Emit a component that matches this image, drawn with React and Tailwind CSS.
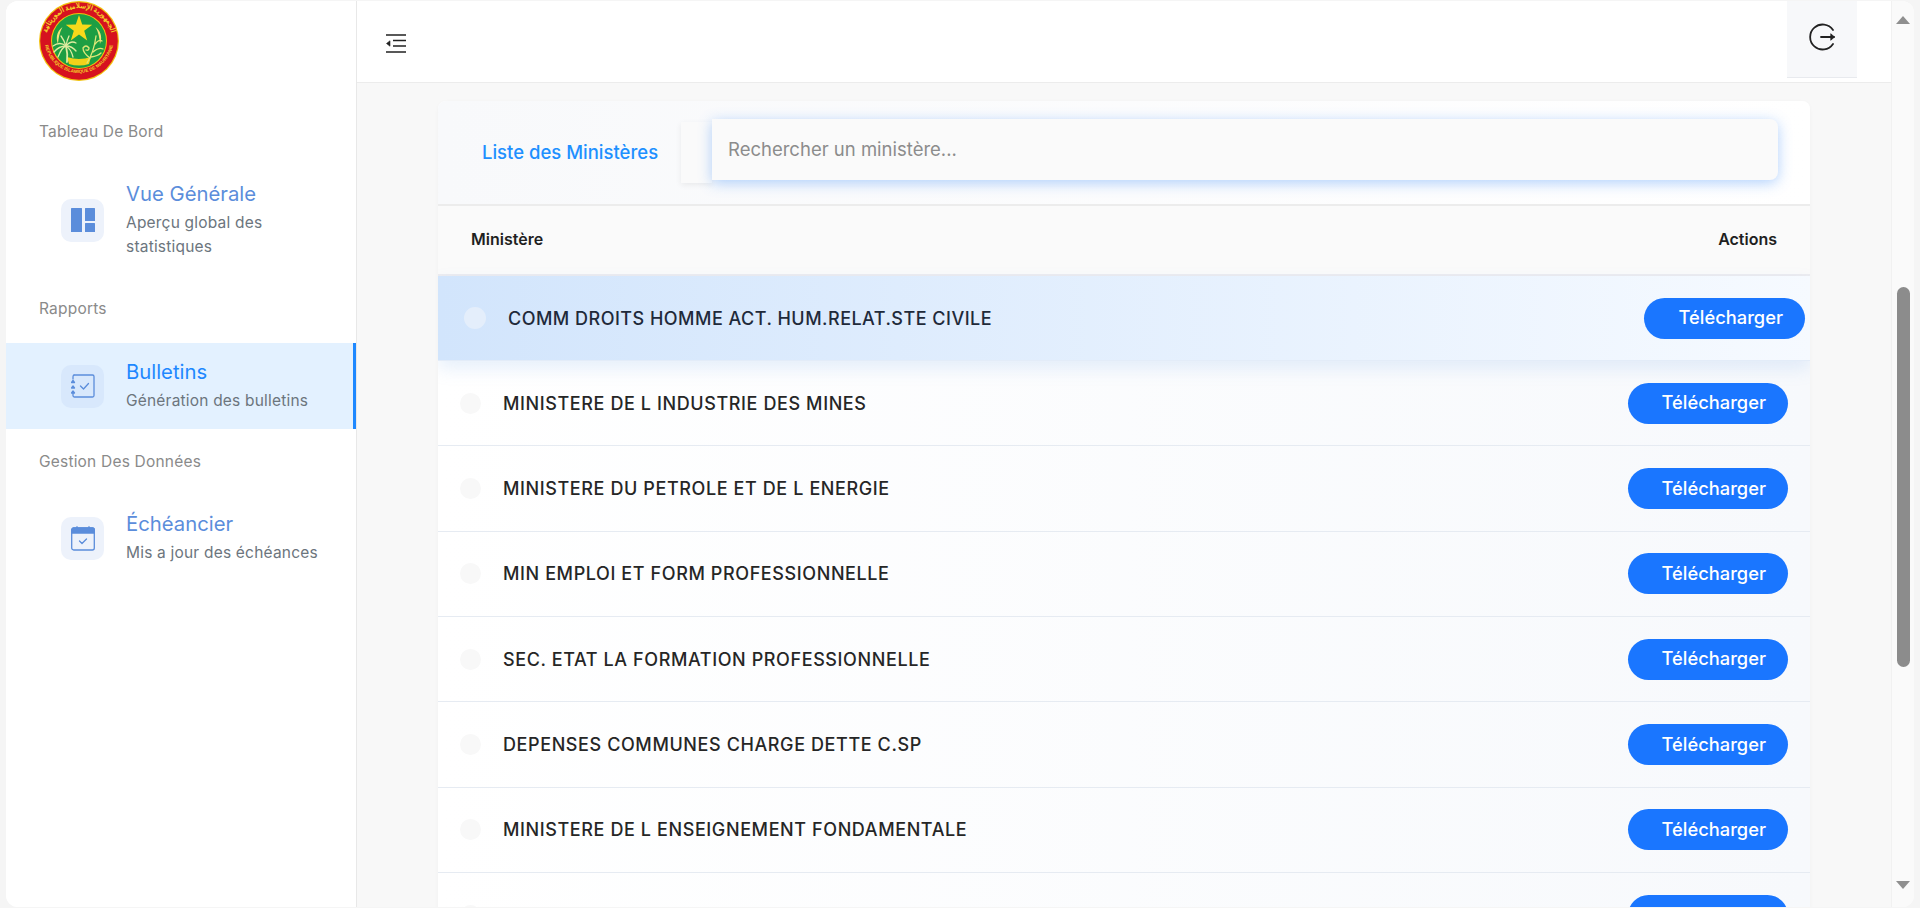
import React from "react";

const rows = [
  "MINISTERE DE L INDUSTRIE DES MINES",
  "MINISTERE DU PETROLE ET DE L ENERGIE",
  "MIN EMPLOI ET FORM PROFESSIONNELLE",
  "SEC. ETAT LA FORMATION PROFESSIONNELLE",
  "DEPENSES COMMUNES CHARGE DETTE C.SP",
  "MINISTERE DE L ENSEIGNEMENT FONDAMENTALE",
  "",
];

const font = { fontFamily: "Inter, 'Noto Sans', 'Liberation Sans', sans-serif" };

const Logo = () => (
  <svg width="82" height="82" viewBox="0 0 82 82">
    <defs>
      <path id="arcTop" d="M8 45 A33.2 33.2 0 1 1 74 45" />
      <path id="arcBottom" d="M6.5 42 A34.7 34.7 0 0 0 75.5 42" />
    </defs>
    <circle cx="41" cy="41" r="40" fill="#f2c20f" />
    <circle cx="41" cy="41" r="38.8" fill="#d6121f" />
    <circle cx="41" cy="41" r="28" fill="#f2c20f" />
    <circle cx="41" cy="41" r="27" fill="#1d9e43" />
    <text fontSize="7" fill="#f4cf2a" fontFamily="'Noto Sans', sans-serif" fontWeight="700">
      <textPath href="#arcTop" startOffset="50%" textAnchor="middle">الجمهورية الإسلامية الموريتانية</textPath>
    </text>
    <text fontSize="4.6" fill="#f4cf2a" fontFamily="'Liberation Sans', sans-serif" fontWeight="700">
      <textPath href="#arcBottom" startOffset="50%" textAnchor="middle">REPUBLIQUE ISLAMIQUE DE MAURITANIE</textPath>
    </text>
    {/* star */}
    <polygon fill="#f7d91a" points="41,15 44.2,24.6 54.3,24.7 46.2,30.8 49.2,40.5 41,34.6 32.8,40.5 35.8,30.8 27.7,24.7 37.8,24.6" />
    {/* crescents */}
    <path d="M24.5 27 C18 32 18 39 20 44 C20.5 38 21.5 32 24.5 27Z" fill="#f2e27a" />
    <path d="M57.5 27 C64 32 64 39 62 44 C61.5 38 60.5 32 57.5 27Z" fill="#f2e27a" />
    {/* base */}
    <path d="M29 57 L31 64 Q41 67 51 64 L53 57 Q41 61 29 57Z" fill="#f2d21a" />
    {/* palm */}
    <g stroke="#dfeca0" strokeWidth="1.3" fill="none" strokeLinecap="round">
      <path d="M29 62 Q30 54 28 46" strokeWidth="1.8" />
      <path d="M28 46 Q22 41 15 46" />
      <path d="M28 46 Q21 46 16 52" />
      <path d="M28 46 Q24 47 20 57" />
      <path d="M28 46 Q26 40 23 36" />
      <path d="M28 46 Q29 40 31 36" />
      <path d="M28 46 Q33 40 38 43" />
      <path d="M28 46 Q34 46 38 51" />
      <path d="M28 46 Q33 49 35 57" />
    </g>
    {/* millet */}
    <g stroke="#dfe878" strokeWidth="1.3" fill="none" strokeLinecap="round">
      <path d="M49 63 Q56 52 58 36" />
      <path d="M55 52 Q61 47 65 49" />
      <path d="M57 44 Q61 39 64 41" />
      <path d="M53 57 Q60 56 63 53" />
      <path d="M52 58 Q45 53 45 48 Q48 44 51 48 Q51 51 48 50" />
    </g>
  </svg>
);

const IconBox = ({ active, children }) => (
  <div className={`flex h-[43px] w-[43px] shrink-0 items-center justify-center rounded-[10px] ${active ? "bg-[#d8e8fc]" : "bg-[#edf2fb]"}`}>
    {children}
  </div>
);

const GridIcon = () => (
  <svg width="24" height="24" viewBox="0 0 24 24" fill="#5b8ddb">
    <rect x="0" y="0" width="11" height="24" rx="0.5" />
    <rect x="14" y="0" width="10" height="13" rx="0.5" />
    <rect x="14" y="15" width="10" height="9" rx="0.5" />
  </svg>
);

const NotebookIcon = () => (
  <svg width="24" height="24" viewBox="0 0 24 24" fill="none" stroke="#5b8ddb" strokeWidth="1.3" strokeLinecap="round" strokeLinejoin="round">
    <path d="M3 1 H21.5 A1.5 1.5 0 0 1 23 2.5 V21.5 A1.5 1.5 0 0 1 21.5 23 H3.5 A1.5 1.5 0 0 1 2 21.5 V19" />
    <path d="M2 5 V3 A2 2 0 0 1 3 1" />
    <path d="M9.5 12 L12.5 15 L17.5 9.5" />
    <path d="M0.5 8.5 H3.5 L2 6.5Z M0.5 14 H3.5 L2 12Z M0.5 19 H3.5 L2 17Z" fill="#5b8ddb" />
  </svg>
);

const CalendarIcon = () => (
  <svg width="24" height="25" viewBox="0 0 24 25" fill="none" stroke="#5b8ddb" strokeWidth="1.3" strokeLinecap="round" strokeLinejoin="round">
    <rect x="0.7" y="2" width="22.6" height="22" rx="2" />
    <path d="M0.7 7 V4 A2 2 0 0 1 2.7 2 H21.3 A2 2 0 0 1 23.3 4 V7Z" fill="#5b8ddb" />
    <path d="M6 0.7 V2 M18 0.7 V2" />
    <path d="M8.5 15 L11 17.5 L15.5 13" />
  </svg>
);

const NavItem = ({ title, sub, active, icon }) => (
  <div className={`flex items-center pl-[55px] ${active ? "h-[86px] border-r-[3px] border-[#1e88ff] bg-[#e3f1ff]" : ""}`}>
    <IconBox active={active}>{icon}</IconBox>
    <div className="ml-[22px]">
      <div className={`text-[20.3px] leading-[26px] ${active ? "text-[#1e88ff]" : "text-[#5b8ddb]"}`}>{title}</div>
      <div className="mt-[4px] text-[15.5px] leading-[24px] tracking-[0.2px] text-[#6c757d]">{sub}</div>
    </div>
  </div>
);

const SectionLabel = ({ children, className }) => (
  <div className={`pl-[33px] text-[15.5px] leading-[20px] tracking-[0.2px] text-[#8a8a8a] ${className}`}>{children}</div>
);

const Row = ({ name, first }) => (
  <div
    className={
      first
        ? "relative z-10 flex h-[85px] items-center border-b border-[#e3ecf8] bg-gradient-to-r from-[#d2e5fc] to-[#f6faff] pl-[26px] pr-[5px] shadow-[0_8px_16px_rgba(120,170,235,0.18)]"
        : "flex h-[85.33px] items-center border-b border-[#e6ebf2] bg-gradient-to-r from-[#ffffff] to-[#f7f9fc] pl-[22px] pr-[22px]"
    }
  >
    <div className={`rounded-full ${first ? "h-[22px] w-[22px] bg-[#e4eefb]" : "h-[21px] w-[21px] bg-[#f8f8f8]"}`} />
    <div className={`ml-[22px] mt-[1px] flex-1 text-[18px] font-medium leading-[24px] ${first ? "tracking-[0.48px] text-[#1f2a3a]" : "tracking-[0.6px] text-[#262626]"}`}>{name}</div>
    <button className={`h-[41px] rounded-full bg-[#1a76ff] pr-[22px] text-[18.3px] font-medium text-white ${first ? "pl-[35px]" : "pl-[34px]"}`}>
      Télécharger
    </button>
  </div>
);

export default function App() {
  return (
    <div style={font} className="h-screen w-screen overflow-hidden bg-[#f5f5f5] px-[6px] pb-[1px] pt-[1px]">
      <div className="flex h-full overflow-hidden rounded-[12px] bg-white">
        {/* Sidebar */}
        <aside className="w-[351px] shrink-0 border-r border-[#e8e8e8] bg-white">
          <div className="-mt-[1px] h-[83px] pl-[32px]">
            <Logo />
          </div>
          <SectionLabel className="mt-[39px]">Tableau De Bord</SectionLabel>
          <div className="mt-[39px]">
            <NavItem title="Vue Générale" sub={<>Aperçu global des<br />statistiques</>} icon={<GridIcon />} />
          </div>
          <SectionLabel className="mt-[40px]">Rapports</SectionLabel>
          <div className="mt-[24px]">
            <NavItem active title="Bulletins" sub="Génération des bulletins" icon={<NotebookIcon />} />
          </div>
          <SectionLabel className="mt-[23px]">Gestion Des Données</SectionLabel>
          <div className="mt-[39px]">
            <NavItem title="Échéancier" sub="Mis a jour des échéances" icon={<CalendarIcon />} />
          </div>
        </aside>

        {/* Content */}
        <div className="flex min-w-0 flex-1 flex-col">
          <header className="flex h-[82px] shrink-0 items-start justify-between border-b border-[#ececec] bg-white pl-[29px] pr-[34px]">
            <svg className="mt-[33px]" width="21" height="19" viewBox="0 0 21 19" fill="none" stroke="#222" strokeWidth="1.6">
              <path d="M0 1 H20 M0 18 H20 M7 6.5 H20 M7 12 H20" />
              <path d="M0.5 9.5 L4 6.8 V12.2Z" fill="#222" strokeWidth="0.6" />
            </svg>
            <div className="flex h-[77px] w-[70px] items-center justify-center border-b border-[#e8eaee] bg-[#f7f8fa] pb-[5px]">
              <svg width="28" height="28" viewBox="0 0 28 28" fill="none" stroke="#222" strokeWidth="1.8" strokeLinecap="round">
                <path d="M25 7 A12.5 12.5 0 1 0 25 21" />
                <path d="M13 14 H26" />
                <path d="M23 11 L26.5 14 L23 17Z" fill="#222" strokeWidth="0.8" />
              </svg>
            </div>
          </header>

          <main className="min-h-0 flex-1 overflow-hidden bg-[#f8f8f8] px-[81px] pt-[18px]">
            <div className="overflow-hidden rounded-t-[8px] bg-white shadow-[0_1px_4px_rgba(0,0,0,0.03)]">
              {/* Card title and search */}
              <div className="flex h-[105px] border-b-2 border-[#ececec] bg-gradient-to-r from-[#f8f9fb] to-[#ffffff] pl-[44px]">
                <div className="mt-[39px] w-[199px] text-[18.5px] font-medium leading-[24px] text-[#1e90ff]">Liste des Ministères</div>
                <div className="mt-[21px] h-[61px] w-[31px] bg-[#fafafa] shadow-[0_2px_6px_rgba(0,0,0,0.07)]" />
                <div className="mt-[18px] flex h-[61px] w-[1066px] items-center rounded-r-[8px] bg-[#fafafa] pl-[16px] text-[18.5px] text-[#8c8c8c] shadow-[0_3px_14px_rgba(70,145,250,0.42)]">
                  Rechercher un ministère...
                </div>
              </div>

              {/* Table head */}
              <div className="flex h-[70px] items-center justify-between border-b-2 border-[#ececf0] bg-[#fafafa] pb-[2px] pl-[33px] pr-[33px] text-[16px] font-semibold text-[#1f1f1f]">
                <span>Ministère</span>
                <span>Actions</span>
              </div>

              <Row first name="COMM DROITS HOMME ACT. HUM.RELAT.STE CIVILE" />
              {rows.map((name, i) => (
                <Row key={i} name={name} />
              ))}
            </div>
          </main>
        </div>

        {/* Scrollbar */}
        <div className="relative flex w-[23px] shrink-0 flex-col items-center border-l border-[#f1f1f1] bg-[#fafafa]">
          <div className="mt-[15px] h-0 w-0 border-x-[7.5px] border-b-[8px] border-x-transparent border-b-[#8f8f8f]" />
          <div className="mt-[263px] h-[380px] w-[13px] rounded-full bg-[#8c8c8c]" />
          <div className="mt-[214px] h-0 w-0 border-x-[7.5px] border-t-[8px] border-x-transparent border-t-[#8f8f8f]" />
        </div>
      </div>
    </div>
  );
}
